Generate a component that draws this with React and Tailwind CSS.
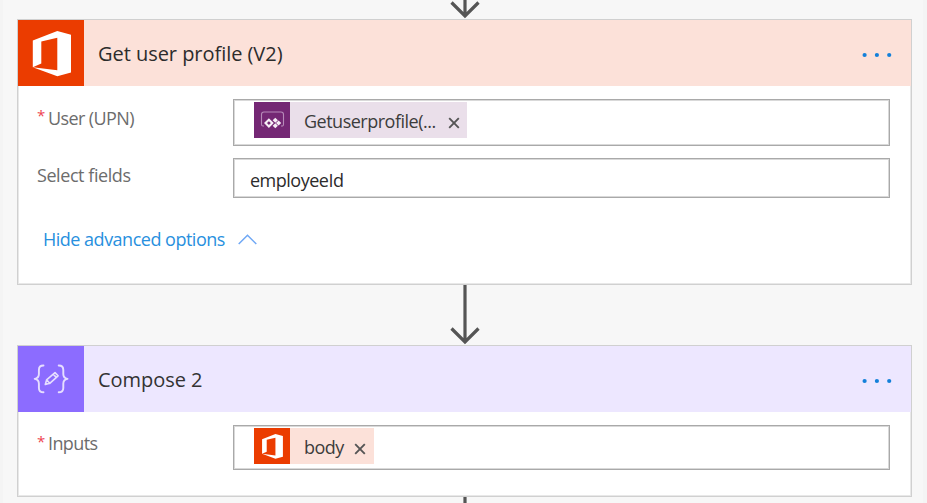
import React from "react";

function OfficeIcon({ className }) {
  return (
    <svg viewBox="0 0 66 66" className={className}>
      <rect width="66" height="66" fill="#eb3c00" />
      <path
        fill="#fff"
        d="M14.8 20.5 39.3 11 53 14.8V52.6L39.3 56.3 14.8 47.3 39.3 50.3V17.8L23.3 21.6V43.6L14.8 47.3Z"
      />
    </svg>
  );
}

function ComposeIcon({ className }) {
  return (
    <svg viewBox="0 0 66 66" className={className}>
      <rect width="66" height="66" fill="#8c6cff" />
      <g fill="none" stroke="#e6deff" strokeWidth="1.9" strokeLinecap="round" strokeLinejoin="round">
        <path d="M25.500 19.500c-3.400 0-4.600 1.300-4.600 4.400v4.200c0 3-1.200 4.300-4.200 4.800 3 .5 4.200 1.800 4.200 4.800v4.200c0 3.100 1.200 4.400 4.600 4.400" />
        <path d="M40.700 19.500c3.400 0 4.600 1.300 4.600 4.400v4.200c0 3 1.200 4.300 4.200 4.800-3 .5-4.200 1.800-4.200 4.800v4.200c0 3.100-1.200 4.400-4.600 4.400" />
        <path strokeWidth="1.600" d="M27.300 38.500l1.300-4.600 8.400-7.300 3.100 3.200-8.300 7.500zM28.600 33.900l3.200 3.400M35.200 28.200l3.100 3.200" />
      </g>
    </svg>
  );
}

function PowerAppsIcon({ className }) {
  return (
    <svg viewBox="0 0 36 36" className={className}>
      <rect width="36" height="36" fill="#742774" />
      <path d="M10 24H9a1.500 1.500 0 0 1-1.500-1.500v-10A2.500 2.500 0 0 1 10 10h17a2.500 2.500 0 0 1 2.500 2.500v10A1.500 1.500 0 0 1 28 24h-1" fill="none" stroke="#b68ab8" strokeWidth="1.100" />
      <path d="M14.900 17.700l3.400 3.400-3.400 3.400-3.400-3.400z" fill="none" stroke="#f6eef6" strokeWidth="2.100" />
      <path d="M21.300 15.800l2.600 2.500-2.600 2.500-2.600-2.500zM21.300 21.200l2.600 2.500-2.600 2.500-2.600-2.500zM24.600 18.500l2.600 2.500-2.600 2.500-2.600-2.500z" fill="#f6eef6" />
    </svg>
  );
}

function Arrow() {
  return (
    <svg viewBox="0 0 34 60" className="block h-[60px] w-[34px] shrink-0" fill="none" stroke="#555" strokeWidth="3.200">
      <path d="M17 0V57M3.500 43.500 17 57 30.500 43.500" />
    </svg>
  );
}

function Dots() {
  return (
    <svg viewBox="0 0 30 6" className="mt-[3px] mr-[19px] ml-auto h-[6px] w-[30px]" fill="#1380da">
      <circle cx="2.600" cy="3" r="2.100" />
      <circle cx="14.900" cy="3" r="2.100" />
      <circle cx="27.200" cy="3" r="2.100" />
    </svg>
  );
}

function Close() {
  return (
    <svg viewBox="0 0 12 12" className="mt-[5px] size-[12px] shrink-0" fill="none" stroke="#555" strokeWidth="1.900">
      <path d="M1.200 1.200l9.600 9.600M10.800 1.200L1.200 10.800" />
    </svg>
  );
}

function Header({ icon, title, className }) {
  return (
    <div className={`flex h-[66px] items-center ${className}`}>
      {icon}
      {title}
      <Dots />
    </div>
  );
}

function Label({ required, children }) {
  return (
    <div className="flex w-[215px] shrink-0 pl-[19px] text-[18px] leading-[24px] text-[#6c6c6c]">
      {required && <span className="w-[11px] pt-[4px] text-[15px] text-[#ee4450]">*</span>}
      {children}
    </div>
  );
}

const field = "flex w-[657px] border border-[#a9a9a9] shadow-[inset_0_0_0_1px_#d9d9d9]";
const card = "w-[895px] shrink-0 border border-[#d0d0d0] bg-white shadow-[inset_0_0_0_1px_#e8e8e8]";

export default function App() {
  return (
    <div className="flex h-[503px] w-[927px] flex-col items-center overflow-hidden border-r-[4px] border-l-[3px] border-[#f4f4f4] bg-[#f7f7f7] pl-[3px] font-['Open_Sans','Noto_Sans',sans-serif] whitespace-nowrap">
      <div className="flex h-[19px] shrink-0 flex-col justify-end overflow-hidden">
        <Arrow />
      </div>
      <section className={`h-[266px] ${card}`}>
        <Header
          className="bg-[#fce1d9]"
          icon={<OfficeIcon className="size-[66px]" />}
          title={<h2 className="pt-[2px] pl-[14px] text-[20px] tracking-[-0.040px] text-[#2c2c2c]">Get user profile (V2)</h2>}
        />
        <div className="flex pt-[13px]">
          <Label required><span className="pt-[7px] tracking-[-0.600px]">User (UPN)</span></Label>
          <div className={`h-[47px] pt-[2px] pl-[20px] ${field}`}>
            <div className="flex h-[36px] w-[213px] items-center bg-[#eadfea]">
              <PowerAppsIcon className="size-[36px]" />
              <span className="w-[158px] pt-[2px] pl-[14px] text-[18px] tracking-[-0.500px] text-[#3c3c3c]">Getuserprofile(...</span>
              <Close />
            </div>
          </div>
        </div>
        <div className="flex pt-[12px]">
          <Label><span className="pt-[5px] tracking-[-0.430px]">Select fields</span></Label>
          <div className={`h-[40px] items-center pt-[4px] pl-[16px] text-[18px] tracking-[-0.500px] text-[#2c2c2c] ${field}`}>employeeId</div>
        </div>
        <div className="flex items-center pt-[28px] pl-[25px] text-[#2890de]">
          <span className="w-[195px] text-[18px] leading-[26px] tracking-[-0.500px]">Hide advanced options</span>
          <svg viewBox="0 0 19 11" className="h-[11px] w-[19px]" fill="none" stroke="#6fa8f5" strokeWidth="1.500">
            <path d="M.7 10 9.500 1.300 18.300 10" />
          </svg>
        </div>
      </section>
      <Arrow />
      <section className={`h-[152px] ${card}`}>
        <Header
          className="bg-[#ede7ff]"
          icon={<ComposeIcon className="size-[66px]" />}
          title={<h2 className="pt-[1px] pl-[14px] text-[20px] tracking-[-0.040px] text-[#333]">Compose 2</h2>}
        />
        <div className="flex pt-[13px]">
          <Label required><span className="pt-[6px] tracking-[-0.600px]">Inputs</span></Label>
          <div className={`h-[45px] pt-[2px] pl-[20px] ${field}`}>
            <div className="flex h-[36px] w-[120px] items-center bg-[#fce1d9]">
              <OfficeIcon className="size-[36px]" />
              <span className="w-[64px] pt-[2px] pl-[14px] text-[18px] tracking-[-0.500px] text-[#3c3c3c]">body</span>
              <Close />
            </div>
          </div>
        </div>
      </section>
      <Arrow />
    </div>
  );
}
